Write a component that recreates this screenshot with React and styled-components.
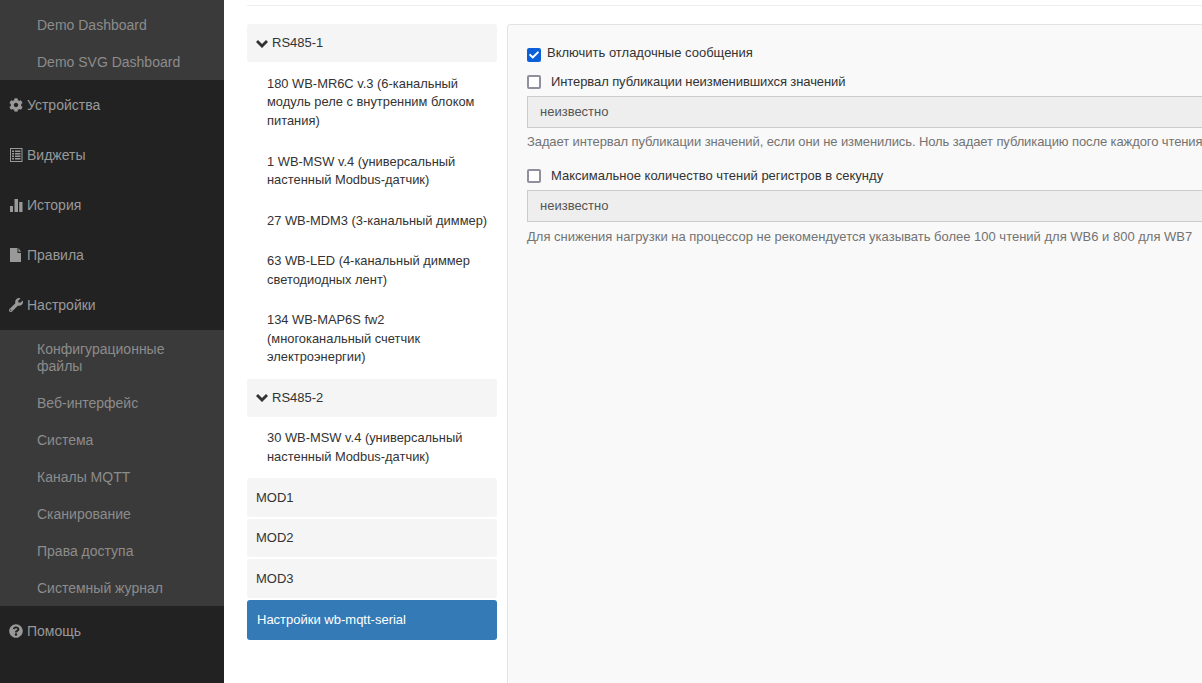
import React from "react";
import styled, { createGlobalStyle } from "styled-components";
import { FaCog, FaWrench, FaQuestionCircle, FaCheck } from "react-icons/fa";

const GlobalStyle = createGlobalStyle`
  html, body {
    margin: 0;
    height: 683px;
    overflow: hidden;
    background: #fff;
  }
  * {
    box-sizing: border-box;
  }
  body {
    font-family: "Liberation Sans", Arial, sans-serif;
    color: #333;
  }
`;

const Page = styled.div`
  display: flex;
  width: 1202px;
  height: 683px;
  overflow: hidden;
`;

const Sidebar = styled.nav`
  flex: 0 0 224px;
  height: 683px;
  background: #222;
  font-size: 14px;
  color: #999;
`;

const SubMenu = styled.div`
  background: #3a3a3a;
  padding-top: ${(p) => (p.$top ? "6px" : "0")};
`;

const SubItem = styled.div`
  padding: 11px 20px 9px 37px;
  line-height: 17px;
  color: #8c8c8c;
`;

const MenuItem = styled.div`
  display: flex;
  align-items: center;
  gap: 4px;
  height: 50px;
  padding-left: 9px;
  svg {
    flex: 0 0 14px;
    width: 14px;
    height: 14px;
    fill: currentColor;
  }
`;

const Main = styled.main`
  flex: 1;
  min-width: 0;
  padding-left: 23px;
  font-size: 13px;
  line-height: 18.5px;
`;

const TopRule = styled.div`
  margin: 5px 0 18px;
  border-top: 1px solid #eee;
`;

const Columns = styled.div`
  display: flex;
  gap: 10px;
`;

const Pills = styled.div`
  flex: 0 0 250px;
  display: flex;
  flex-direction: column;
  gap: 2px;
`;

const Group = styled.div`
  display: flex;
  align-items: center;
  gap: 4px;
  padding: 10.4px 9px 9.6px;
  border-radius: 3px;
  background: #f5f5f5;
  svg {
    width: 12px;
    height: 8px;
    fill: #333;
  }
`;

const Device = styled.div`
  padding: 10.4px 6px 9.6px 20px;
  font-size: 12.9px;
  line-height: 18.57px;
`;

const Active = styled.div`
  padding: 11.4px 10px 10.6px;
  border-radius: 3px;
  background: #337ab7;
  color: #fff;
`;

const Panel = styled.section`
  flex: 0 0 1200px;
  height: 900px;
  padding: 19px;
  background: #f9f9f9;
  border: 1px solid #e3e3e3;
  border-radius: 3px;
`;

const CheckRow = styled.label`
  display: flex;
  align-items: center;
  gap: ${(p) => (p.$checked ? "6px" : "10px")};
  margin-top: ${(p) => p.$gap || 0}px;
  letter-spacing: ${(p) => p.$spacing || 0}px;
  white-space: nowrap;
`;

const Box = styled.span`
  flex: 0 0 14px;
  display: flex;
  align-items: center;
  justify-content: center;
  width: 14px;
  height: 14px;
  margin-top: ${(p) => (p.$checked ? "4px" : "0")};
  border-radius: 2px;
  border: ${(p) => (p.$checked ? "0" : "2px solid #8f8f9d")};
  background: ${(p) => (p.$checked ? "#0b5fd8" : "#fff")};
  color: #fff;
  svg {
    width: 10px;
    height: 10px;
  }
`;

const Field = styled.div`
  height: 32px;
  margin-top: 5px;
  padding: 6px 12px;
  background: #eee;
  border: 1px solid #ccc;
  color: #555;
`;

const Help = styled.div`
  margin-top: ${(p) => p.$gap || 5}px;
  color: #737373;
  letter-spacing: ${(p) => p.$spacing || 0}px;
  white-space: nowrap;
`;

function ChevronIcon() {
  return (
    <svg viewBox="0 0 12 8">
      <path d="M0 2l2-2 4 4 4-4 2 2-6 6z" />
    </svg>
  );
}

function ListIcon() {
  return (
    <svg viewBox="0 0 14 14">
      <path
        fillRule="evenodd"
        d="M1 0h12.5v14H1zM2 1v12h10.5V1zM3 2.5h2v1.5H3zM6 2.5h5.5v1.5H6zM3 5h2v1.5H3zM6 5h5.5v1.5H6zM3 7.5h2V9H3zM6 7.5h5.5V9H6zM3 10h2v1.5H3zM6 10h5.5v1.5H6z"
      />
    </svg>
  );
}

function StatsIcon() {
  return (
    <svg viewBox="0 0 14 14">
      <path d="M1 8h3v6H1zM5.5 1h3.5v13H5.5zM10.2 4h3.3v10h-3.3z" />
    </svg>
  );
}

function FileIcon() {
  return (
    <svg viewBox="0 0 14 14">
      <path d="M1 0h7.5v5H12v9H1zM9.5 0L12 3.8H9.5z" />
    </svg>
  );
}

const settingsItems = [
  "Конфигурационные файлы",
  "Веб-интерфейс",
  "Система",
  "Каналы MQTT",
  "Сканирование",
  "Права доступа",
  "Системный журнал",
];

export default function App() {
  return (
    <Page>
      <GlobalStyle />
      <Sidebar>
        <SubMenu $top>
          <SubItem>Demo Dashboard</SubItem>
          <SubItem>Demo SVG Dashboard</SubItem>
        </SubMenu>
        <MenuItem>
          <FaCog />
          Устройства
        </MenuItem>
        <MenuItem>
          <ListIcon />
          Виджеты
        </MenuItem>
        <MenuItem>
          <StatsIcon />
          История
        </MenuItem>
        <MenuItem>
          <FileIcon />
          Правила
        </MenuItem>
        <MenuItem>
          <FaWrench />
          Настройки
        </MenuItem>
        <SubMenu>
          {settingsItems.map((item) => (
            <SubItem key={item}>{item}</SubItem>
          ))}
        </SubMenu>
        <MenuItem>
          <FaQuestionCircle />
          Помощь
        </MenuItem>
      </Sidebar>
      <Main>
        <TopRule />
        <Columns>
          <Pills>
            <Group>
              <ChevronIcon />
              RS485-1
            </Group>
            <Device>180 WB-MR6C v.3 (6-канальный модуль реле с внутренним блоком питания)</Device>
            <Device>1 WB-MSW v.4 (универсальный настенный Modbus-датчик)</Device>
            <Device>27 WB-MDM3 (3-канальный диммер)</Device>
            <Device>63 WB-LED (4-канальный диммер светодиодных лент)</Device>
            <Device>134 WB-MAP6S fw2 (многоканальный счетчик электроэнергии)</Device>
            <Group>
              <ChevronIcon />
              RS485-2
            </Group>
            <Device>30 WB-MSW v.4 (универсальный настенный Modbus-датчик)</Device>
            <Group>MOD1</Group>
            <Group>MOD2</Group>
            <Group>MOD3</Group>
            <Active>Настройки wb-mqtt-serial</Active>
          </Pills>
          <Panel>
            <CheckRow $checked>
              <Box $checked>
                <FaCheck />
              </Box>
              Включить отладочные сообщения
            </CheckRow>
            <CheckRow $gap={10} $spacing={-0.09}>
              <Box />
              Интервал публикации неизменившихся значений
            </CheckRow>
            <Field>неизвестно</Field>
            <Help $spacing={-0.1}>Задает интервал публикации значений, если они не изменились. Ноль задает публикацию после каждого чтения.</Help>
            <CheckRow $gap={15}>
              <Box />
              Максимальное количество чтений регистров в секунду
            </CheckRow>
            <Field>неизвестно</Field>
            <Help $gap={6}>Для снижения нагрузки на процессор не рекомендуется указывать более 100 чтений для WB6 и 800 для WB7</Help>
          </Panel>
        </Columns>
      </Main>
    </Page>
  );
}
